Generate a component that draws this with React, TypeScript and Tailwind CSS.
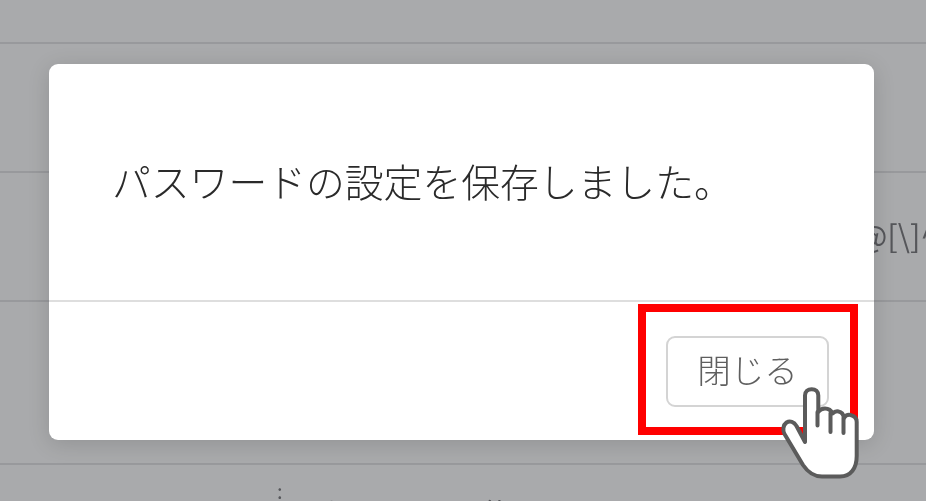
const rowLine = "border-b-2 border-[#98999c]";

function PointerHand() {
  return (
    <svg className="absolute left-[780px] top-[386px]" width="80" height="94" viewBox="0 0 80 94" fill="none">
      <path
        d="M25 56V9.5C25 5.5 28 3.2 31.7 3.2C35.5 3.2 38.3 5.5 38.3 9.5V26C40 23.5 42.5 22.5 45 22.5C48.5 22.5 51 24 52.5 27.5C54.5 25.5 56.5 25 58.5 25.5C61.5 26 63.5 28.5 64 32C65.5 29.5 68 28.5 70.5 29C74.5 29.8 76.7 32.5 76.7 36V70C76.7 82 71 90.5 60 90.5H42C34 90.5 28 86.5 23 79L4.5 48C2.5 44.5 3 39 6.5 36.5C10 34.5 14 36 16.5 40Z"
        fill="#fff"
        stroke="#5b5b5b"
        strokeWidth="4"
        strokeLinejoin="round"
        strokeLinecap="round"
      />
      <path d="M37.5 26V39.5M50.5 27V46M63.5 32V47" stroke="#5b5b5b" strokeWidth="4" strokeLinecap="round" />
    </svg>
  );
}

export default function App() {
  return (
    <div className="relative h-[501px] w-[926px] overflow-hidden bg-[#a9aaac] blur-[0.5px] font-['Noto_Sans_CJK_JP','Liberation_Sans',sans-serif]">
      <div className={`h-[44px] ${rowLine}`} />
      <div className={`h-[129px] ${rowLine}`} />
      <div className={`h-[129px] ${rowLine}`}>
        <p className="whitespace-nowrap pl-[858px] pt-[41px] text-[31px] leading-[42px] font-normal text-[#55565a]">
          {"@[\\]^_`{|}~"}
        </p>
      </div>
      <div className={`h-[163px] ${rowLine}`} />
      <div className="flex h-[36px] items-start overflow-hidden whitespace-nowrap pl-[277px] pt-[14px] font-normal text-[#55565a]">
        <span className="w-[30px] text-[20px] leading-[24px]">:</span>
        <span className="mt-[13px] text-[29px] leading-[40px]">パスワードに使用できます</span>
      </div>

      {/* modal */}
      <div className="absolute left-[49px] top-[64px] h-[376px] w-[825px] rounded-[9px] bg-white shadow-[0_4px_22px_rgba(0,0,0,0.14)]">
        <div className="h-[238px] border-b-2 border-[#dedede] pl-[63px] pt-[90px]">
          <p className="text-[38.8px] leading-[52px] font-light whitespace-nowrap text-[#2a2a2a]">
            パスワードの設定を保存しました。
          </p>
        </div>
        <div className="flex justify-end pr-[16px] pt-[2px]">
          <div className="flex h-[131px] w-[220px] justify-center border-[8px] border-[#ff0000] pr-[1px] pt-[24px]">
            <button className="flex h-[71px] w-[163px] items-center justify-center rounded-[9px] border-2 border-[#d4d4d4] bg-white pb-[5px] text-[33.5px] font-light text-[#5f5f5f]">
              閉じる
            </button>
          </div>
        </div>
      </div>

      <PointerHand />
    </div>
  );
}
